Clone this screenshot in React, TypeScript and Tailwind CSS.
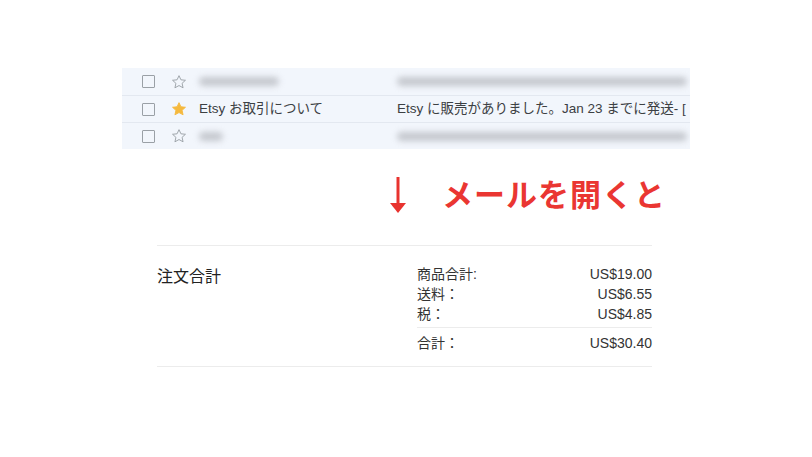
import React from 'react';

const font = "font-['Liberation_Sans','Noto_Sans_CJK_JP',sans-serif]";

function Checkbox() {
  return <div className="w-[13px] h-[13px] border border-[#9aa0a6] rounded-[1px] shrink-0" />;
}

function Star({ filled }: { filled?: boolean }) {
  return (
    <svg width="16" height="16" viewBox="0 0 24 24" className="shrink-0">
      <path
        d="M12 2.5l2.9 6.2 6.8.7-5.1 4.6 1.5 6.7L12 17.3l-6.1 3.4 1.5-6.7L2.3 9.4l6.8-.7z"
        fill={filled ? '#f5b93e' : 'none'}
        stroke={filled ? '#f5b93e' : '#9aa0a6'}
        strokeWidth="1.4"
        strokeLinejoin="round"
      />
    </svg>
  );
}

function Blur({ w, className = '' }: { w: number; className?: string }) {
  return <div className={`h-[9px] rounded-full bg-[#b9bcc2] blur-[3px] opacity-80 shrink-0 ${className}`} style={{ width: w }} />;
}

function Lead({ filled }: { filled?: boolean }) {
  return (
    <div className="w-[77px] flex items-center pl-[20px] gap-[16px] shrink-0">
      <Checkbox />
      <Star filled={filled} />
    </div>
  );
}

export default function App() {
  return (
    <div className={`w-[812px] h-[457px] bg-white ${font} relative overflow-hidden`}>
      <div className="pt-[68px] pl-[122px]">
        <div className="w-[568px] bg-[#f2f6fc] text-[13.5px] text-[#3c4043] overflow-hidden">
          <div className="flex items-center h-[27px]">
            <Lead />
            <div className="w-[198px] shrink-0"><Blur w={80} /></div>
            <Blur w={290} />
          </div>
          <div className="flex items-center h-[27px] border-t border-[#e3e8f0]">
            <Lead filled />
            <span className="w-[198px] shrink-0 whitespace-nowrap">Etsy お取引について</span>
            <span className="whitespace-nowrap">Etsy に販売がありました。Jan 23 までに発送- [</span>
          </div>
          <div className="flex items-center h-[27px] border-t border-[#e3e8f0]">
            <Lead />
            <div className="w-[198px] shrink-0"><Blur w={24} /></div>
            <Blur w={290} />
          </div>
        </div>
      </div>

      <div className="flex items-center pl-[388px] mt-[26px] gap-[34px]">
        <svg width="20" height="40" viewBox="0 0 20 40">
          <line x1="10" y1="2" x2="10" y2="30" stroke="#e8332f" strokeWidth="3" />
          <path d="M2 28 L18 28 L10 38 Z" fill="#e8332f" />
        </svg>
        <span className="text-[31px] font-bold text-[#ea3632] tracking-[1px] leading-none">メールを開くと</span>
      </div>

      <div className="ml-[157px] mt-[30px] w-[495px] border-t border-[#ececec]">
        <div className="flex pt-[18px] pb-[13px] border-b border-[#ececec]">
          <div className="w-[260px] text-[16px] text-[#222] pt-[1px]">注文合計</div>
          <div className="flex-1 text-[14px] text-[#333] leading-[20px]">
            <div className="flex justify-between"><span>商品合計:</span><span>US$19.00</span></div>
            <div className="flex justify-between"><span>送料：</span><span>US$6.55</span></div>
            <div className="flex justify-between pb-[3px]"><span>税：</span><span>US$4.85</span></div>
            <div className="flex justify-between border-t border-[#ececec] pt-[5px]"><span>合計：</span><span>US$30.40</span></div>
          </div>
        </div>
      </div>
    </div>
  );
}
